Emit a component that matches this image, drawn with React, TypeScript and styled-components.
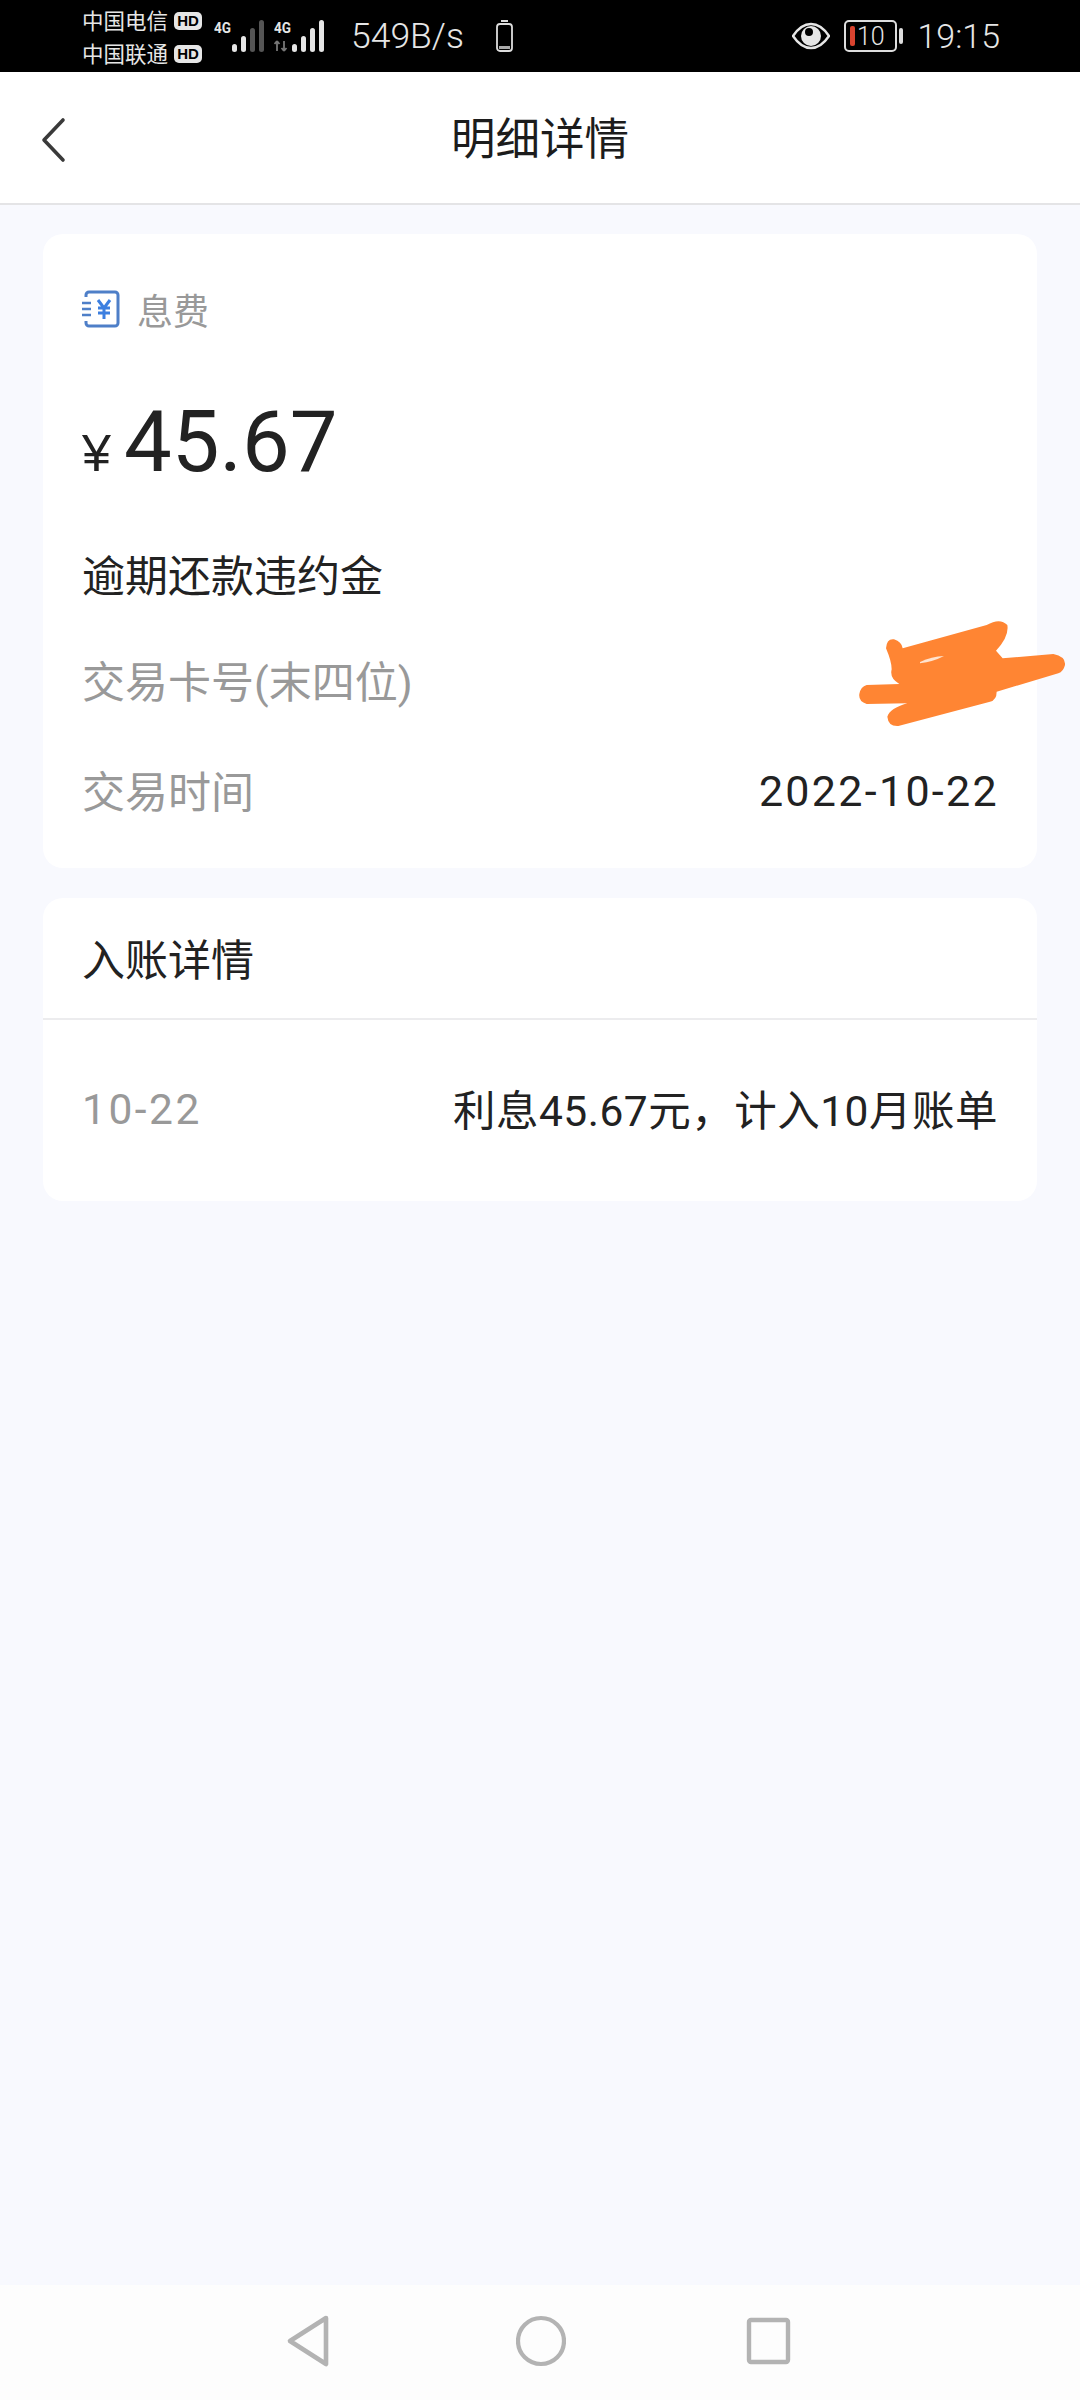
import React from 'react';
import styled, { createGlobalStyle } from 'styled-components';

const CJK = `Roboto, "Noto Sans CJK SC", sans-serif`;

const GlobalStyle = createGlobalStyle`
  html, body {
    margin: 0;
    padding: 0;
    background: #f8f9fe;
    font-family: ${CJK};
  }
  * { box-sizing: border-box; }
`;

const Page = styled.div`
  position: relative;
  width: 1080px;
  height: 2400px;
  display: flex;
  flex-direction: column;
  background: #f8f9fe;
  overflow: hidden;
`;

const StatusBar = styled.div`
  height: 72px;
  flex: none;
  background: #000;
  color: #e6e6e6;
  display: flex;
  align-items: center;
  padding: 0 80px 0 82px;
`;

const Carriers = styled.div`
  display: flex;
  flex-direction: column;
  gap: 6px;
  width: 132px;
  padding-top: 3px;
`;

const Carrier = styled.div`
  display: flex;
  align-items: center;
  gap: 6px;
  font-size: 21.5px;
  line-height: 27px;
  white-space: nowrap;
`;

const HdBadge = styled.span`
  width: 28px;
  height: 18px;
  border-radius: 5px;
  background: #e6e6e6;
  color: #000;
  font: 700 15px/18px 'Liberation Sans', sans-serif;
  text-align: center;
`;

const SignalSvg = styled.svg<{ $gap: number }>`
  flex: none;
  margin-left: ${p => p.$gap}px;
`;

const Speed = styled.span`
  margin-left: 25px;
  font-size: 35.5px;
  font-weight: 300;
  white-space: nowrap;
`;

const PhoneSvg = styled.svg`
  flex: none;
  margin-left: 31px;
`;

const StatusRight = styled.div`
  margin-left: auto;
  display: flex;
  align-items: center;
`;

const BatterySvg = styled.svg`
  flex: none;
  margin-left: 14px;
`;

const Clock = styled.span`
  margin-left: 13px;
  font-size: 34px;
  font-weight: 300;
`;

const Header = styled.header`
  position: relative;
  height: 133px;
  flex: none;
  background: #fff;
  border-bottom: 2px solid #e4e4e6;
  display: flex;
  align-items: center;
  justify-content: center;
`;

const BackButton = styled.div`
  position: absolute;
  left: 41px;
  top: 45px;
  width: 32px;
  height: 46px;
`;

const Title = styled.h1`
  margin: 0 0 4px;
  font-size: 44.5px;
  font-weight: 400;
  color: #1c1c1c;
`;

const Content = styled.main`
  flex: 1;
  padding: 29px 43px 0;
  display: flex;
  flex-direction: column;
  gap: 30px;
`;

const Card = styled.section`
  background: #fff;
  border-radius: 20px;
`;

const SummaryCard = styled(Card)`
  height: 634px;
  padding: 55px 38px 0 39px;
  display: flex;
  flex-direction: column;
`;

const TypeRow = styled.div`
  display: flex;
  align-items: center;
  gap: 17px;
  height: 40px;
  font-size: 36px;
  color: #999;
`;

const Amount = styled.div`
  display: flex;
  align-items: baseline;
  margin-top: 67px;
  height: 92px;
  color: #222;
`;

const Currency = styled.span`
  font: 400 52px/92px 'Liberation Sans', ${CJK};
  margin-right: 13px;
`;

const AmountValue = styled.span`
  font-size: 85px;
  line-height: 92px;
  font-weight: 400;
`;

const Note = styled.div`
  margin-top: 67px;
  font-size: 43px;
  line-height: 44px;
  color: #222;
`;

const InfoRow = styled.div`
  display: flex;
  justify-content: space-between;
  align-items: center;
  margin-top: 54px;
  height: 56px;
  font-size: 43px;
`;

const InfoLabel = styled.span<{ $spaced?: boolean }>`
  color: #999;
  letter-spacing: ${p => (p.$spaced ? '2.5px' : '0')};
  padding-bottom: ${p => (p.$spaced ? '2px' : '5px')};
`;

const InfoValue = styled.span<{ $spacing: number; $lift?: number }>`
  color: #222;
  letter-spacing: ${p => p.$spacing}px;
  padding-bottom: ${p => p.$lift ?? 0}px;
`;

const CardHeading = styled.div`
  height: 122px;
  padding: 0 39px 2px;
  display: flex;
  align-items: center;
  font-size: 43px;
  color: #222;
  border-bottom: 2px solid #ececee;
`;

const EntryRow = styled.div`
  height: 181px;
  padding: 0 39px;
  display: flex;
  justify-content: space-between;
  align-items: center;
  font-size: 42.5px;
`;

const Scribble = styled.svg`
  position: absolute;
  left: 820px;
  top: 590px;
`;

const NavBar = styled.nav`
  height: 115px;
  flex: none;
  background: #fdfdfd;
  display: flex;
  align-items: center;
  padding: 0 0 3px 286px;
`;

const NavIcon = styled.svg<{ $gap?: number }>`
  display: block;
  flex: none;
  margin-left: ${p => p.$gap ?? 0}px;
`;

function SignalIcon({ dim, arrows, gap }: { dim?: boolean; arrows?: boolean; gap: number }) {
  const bars = [
    { x: 18, h: 8 },
    { x: 27, h: 16 },
    { x: 36, h: 24 },
    { x: 45, h: 32 },
  ];
  return (
    <SignalSvg $gap={gap} width="52" height="36" viewBox="0 0 52 36">
      <text x="0" y="15" fontSize="15" fontWeight="700" fill="#e6e6e6" fontFamily="Roboto, sans-serif" textLength="17" lengthAdjust="spacingAndGlyphs">4G</text>
      {arrows && <path d="M3 33v-10M3 23l-2.5 3M3 23l2.5 3M10 23v10M10 33l-2.5-3M10 33l2.5-3" stroke="#777" strokeWidth="1.8" fill="none" />}
      {bars.map((b, i) => (
        <rect key={b.x} x={b.x} y={34 - b.h} width="5" height={b.h} rx="2.5" fill={dim && i > 1 ? '#555' : '#e6e6e6'} />
      ))}
    </SignalSvg>
  );
}

export default function App() {
  return (
    <Page>
      <GlobalStyle />
      <StatusBar>
        <Carriers>
          <Carrier>中国电信<HdBadge>HD</HdBadge></Carrier>
          <Carrier>中国联通<HdBadge>HD</HdBadge></Carrier>
        </Carriers>
        <SignalIcon dim gap={0} />
        <SignalIcon arrows gap={8} />
        <Speed>549B/s</Speed>
        <PhoneSvg width="20" height="34" viewBox="0 0 20 34">
          <rect x="2" y="5" width="15" height="27" rx="3" fill="none" stroke="#ddd" strokeWidth="1.8" />
          <rect x="6" y="1" width="7" height="2" fill="#ddd" />
          <rect x="4" y="27" width="11" height="3" fill="#aaa" />
        </PhoneSvg>
        <StatusRight>
          <svg width="38" height="28" viewBox="0 0 38 28">
            <path d="M1 14C7 5 13 2 19 2s12 3 18 12c-6 9-12 12-18 12S7 23 1 14z" fill="none" stroke="#e6e6e6" strokeWidth="2.4" />
            <circle cx="19" cy="14" r="10" fill="#e6e6e6" />
            <circle cx="17" cy="10" r="4" fill="#000" />
          </svg>
          <BatterySvg width="60" height="34" viewBox="0 0 60 34">
            <rect x="1" y="2" width="51" height="30" rx="4" fill="none" stroke="#ddd" strokeWidth="2" />
            <rect x="6" y="7" width="5" height="20" rx="2" fill="#d9432f" />
            <text x="13" y="26" fontSize="25" fill="#e6e6e6" fontFamily="Roboto, sans-serif" fontWeight="300">10</text>
            <rect x="55" y="9" width="4" height="16" rx="2" fill="#ddd" />
          </BatterySvg>
          <Clock>19:15</Clock>
        </StatusRight>
      </StatusBar>

      <Header>
        <BackButton>
          <svg width="32" height="46" viewBox="0 0 32 46">
            <path d="M22 3L3 23l19 20" fill="none" stroke="#3a3a3a" strokeWidth="3.6" strokeLinecap="round" strokeLinejoin="round" />
          </svg>
        </BackButton>
        <Title>明细详情</Title>
      </Header>

      <Content>
        <SummaryCard>
          <TypeRow>
            <svg width="38" height="38" viewBox="0 0 38 38">
              <path d="M4 7V5a3 3 0 0 1 3-3h26a3 3 0 0 1 3 3v28a3 3 0 0 1-3 3H7a3 3 0 0 1-3-3v-2" fill="none" stroke="#4e7fc8" strokeWidth="3" />
              <path d="M0 13h9M0 19h9M0 25h9" stroke="#4e7fc8" strokeWidth="2.6" />
              <path d="M16 10l6 8 6-8M22 18v11M16 18h12M16 23h12" fill="none" stroke="#3c7fe0" strokeWidth="3" />
            </svg>
            息费
          </TypeRow>
          <Amount>
            <Currency>¥</Currency>
            <AmountValue>45.67</AmountValue>
          </Amount>
          <Note>逾期还款违约金</Note>
          <InfoRow>
            <InfoLabel>交易卡号(末四位)</InfoLabel>
          </InfoRow>
          <InfoRow>
            <InfoLabel>交易时间</InfoLabel>
            <InfoValue $spacing={2.3}>2022-10-22</InfoValue>
          </InfoRow>
        </SummaryCard>

        <Card>
          <CardHeading>入账详情</CardHeading>
          <EntryRow>
            <InfoLabel $spaced>10-22</InfoLabel>
            <InfoValue $spacing={0.5} $lift={6}>利息45.67元，计入10月账单</InfoValue>
          </EntryRow>
        </Card>
      </Content>

      <NavBar>
        <NavIcon width="44" height="54" viewBox="0 0 44 54">
          <path d="M40 4L4 27l36 23z" fill="none" stroke="#b3b3b3" strokeWidth="4.6" strokeLinejoin="round" />
        </NavIcon>
        <NavIcon $gap={186} width="50" height="54" viewBox="0 0 50 54">
          <ellipse cx="25" cy="27" rx="23" ry="23" fill="none" stroke="#b3b3b3" strokeWidth="4.2" />
        </NavIcon>
        <NavIcon $gap={180} width="45" height="54" viewBox="0 0 45 54">
          <rect x="3" y="6" width="39" height="42" rx="2" fill="none" stroke="#b3b3b3" strokeWidth="4.4" />
        </NavIcon>
      </NavBar>

      <Scribble width="260" height="260" viewBox="0 0 780 780">
        <path
          d="M198 175Q200 145 222 148Q245 155 248 175L500 105Q540 82 562 105Q568 140 528 182L548 205L700 192Q738 200 735 225Q730 245 715 250L530 305Q530 330 510 335L235 408Q205 410 202 380Q210 355 262 340L140 342Q115 335 118 312Q122 290 140 285L238 282Q208 265 215 238Q215 215 198 175Z"
          fill="#ff8533"
        />
        <path d="M300 216Q335 200 372 198Q340 215 300 220Z" fill="#ffe3cf" />
      </Scribble>
    </Page>
  );
}
